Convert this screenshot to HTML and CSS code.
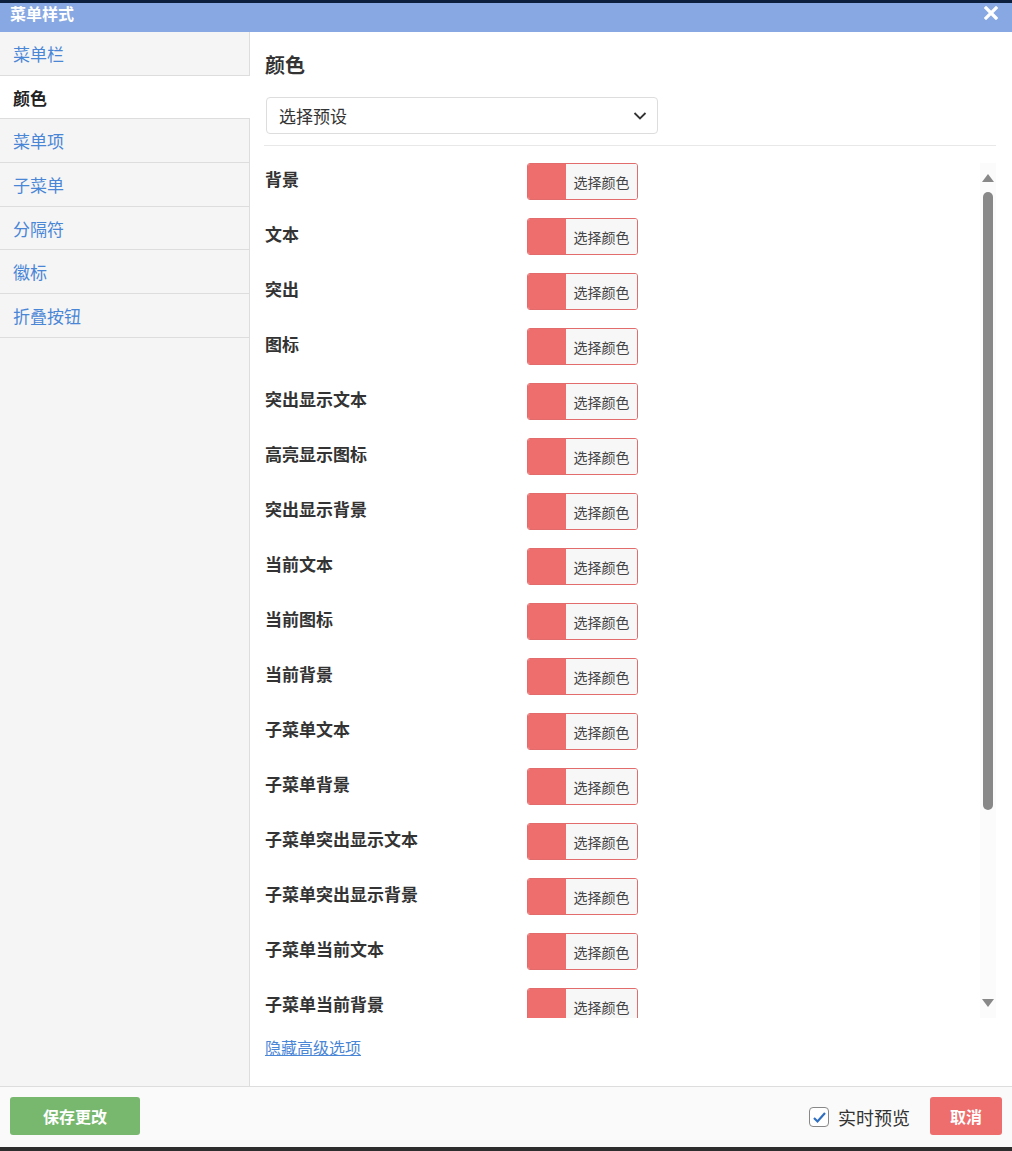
FILE: index.html
```html
<!DOCTYPE html>
<html lang="zh-CN">
<head>
    <meta charset="UTF-8">
    <meta name="viewport" content="width=device-width, initial-scale=1.0">
    <title>菜单样式</title>
    <link rel="stylesheet" href="styles.css">
</head>
<body>
    <div class="top-line"></div>
    <div class="modal-header">
        <span class="modal-title">菜单样式</span>
        <span class="modal-close">
            <svg width="14" height="14" viewBox="0 0 14 14"><path d="M2 2 L12 12 M12 2 L2 12" stroke="#fff" stroke-width="3.2" stroke-linecap="square"/></svg>
        </span>
    </div>

    <div class="modal-body">
        <ul class="side-tabs">
            <li class="tab">菜单栏</li>
            <li class="tab active">颜色</li>
            <li class="tab">菜单项</li>
            <li class="tab">子菜单</li>
            <li class="tab">分隔符</li>
            <li class="tab">徽标</li>
            <li class="tab">折叠按钮</li>
        </ul>

        <div class="tab-content">
            <h3 class="section-title">颜色</h3>
            <div class="preset-select">
                <span>选择预设</span>
                <svg width="14" height="10" viewBox="0 0 14 10"><path d="M1.5 2 L7 7.5 L12.5 2" fill="none" stroke="#333" stroke-width="1.8"/></svg>
            </div>
            <div class="divider"></div>

            <div class="color-panel">
                <div class="color-list" id="color-list">
                    <!-- rows are added by the script below -->
                </div>
                <div class="scrollbar">
                    <div class="arrow-up"></div>
                    <div class="thumb"></div>
                    <div class="arrow-down"></div>
                </div>
            </div>

            <a class="advanced-link" href="#">隐藏高级选项</a>
        </div>
    </div>

    <div class="modal-footer">
        <button class="btn btn-save">保存更改</button>
        <div class="footer-right">
            <label class="live-preview">
                <span class="check-box">
                    <svg width="15" height="13" viewBox="0 0 15 13"><path d="M2 7 L5.5 10.5 L13 2" fill="none" stroke="#2f6fc0" stroke-width="2.2"/></svg>
                </span>
                实时预览
            </label>
            <button class="btn btn-cancel">取消</button>
        </div>
    </div>
    <div class="bottom-line"></div>

    <script>
        const colorOptions = [
            '背景', '文本', '突出', '图标', '突出显示文本', '高亮显示图标',
            '突出显示背景', '当前文本', '当前图标', '当前背景', '子菜单文本',
            '子菜单背景', '子菜单突出显示文本', '子菜单突出显示背景',
            '子菜单当前文本', '子菜单当前背景'
        ];
        const colorList = document.getElementById('color-list');

        colorOptions.forEach(name => {
            const row = document.createElement('div');
            row.classList.add('color-row');

            const label = document.createElement('span');
            label.classList.add('color-label');
            label.textContent = name;

            const picker = document.createElement('div');
            picker.classList.add('color-picker');
            picker.innerHTML = '<span class="swatch"></span><span class="picker-text">选择颜色</span>';

            row.appendChild(label);
            row.appendChild(picker);
            colorList.appendChild(row);
        });
    </script>
</body>
</html>
```

FILE: styles.css
```css
/* 菜单样式弹窗 */
* {
  box-sizing: border-box;
}

body {
  margin: 0;
  width: 1012px;
  height: 1151px;
  overflow: hidden;
  background-color: #fff;
  font-family: "Noto Sans CJK SC", "Noto Sans", sans-serif;
  color: #333;
  display: flex;
  flex-direction: column;
}

.top-line {
  height: 3px;
  background-color: #0c1f3c;
}

.modal-header {
  height: 29px;
  background-color: #87a8e2;
  padding: 0 14px 0 10px;
  display: flex;
  justify-content: space-between;
  align-items: center;
}

.modal-title {
  color: #fff;
  font-size: 16px;
  font-weight: bold;
  line-height: 1;
  margin-top: -10px;
}

.modal-close {
  display: flex;
  margin-top: -9px;
}

.modal-body {
  height: 1054px;
  display: flex;
}

.side-tabs {
  list-style: none;
  margin: 0;
  padding: 0;
  width: 250px;
  background-color: #f5f5f5;
  border-right: 1px solid #ddd;
}

.tab {
  height: 43.7px;
  padding-left: 13px;
  border-bottom: 1px solid #ddd;
  font-size: 17px;
  line-height: 43px;
  color: #4a86d6;
}

.tab.active {
  background-color: #fff;
  color: #222;
  font-weight: bold;
  margin-right: -1px;
}

.tab-content {
  flex: 1;
  padding: 0 16px 0 15px;
  display: flex;
  flex-direction: column;
}

.section-title {
  margin: 18px 0 0 0;
  font-size: 20px;
  line-height: 30px;
  font-weight: bold;
  color: #333;
}

.preset-select {
  margin-top: 17px;
  margin-left: 1px;
  width: 392px;
  height: 37px;
  border: 1px solid #ddd;
  border-radius: 4px;
  padding: 0 10px 0 12px;
  display: flex;
  justify-content: space-between;
  align-items: center;
  font-size: 17px;
  color: #333;
}

.divider {
  margin-top: 11px;
  margin-left: -1px;
  height: 1px;
  background-color: #e8e8e8;
}

.color-panel {
  margin-top: 17px;
  height: 855px;
  display: flex;
}

.color-list {
  flex: 1;
  overflow: hidden;
}

.color-row {
  height: 37px;
  margin-bottom: 18px;
  display: flex;
  align-items: center;
}

.color-label {
  width: 262px;
  font-size: 17px;
  font-weight: bold;
  color: #333;
  margin-top: -6px;
}

.color-picker {
  width: 111px;
  height: 37px;
  border: 1px solid #e26c6c;
  border-radius: 3px;
  overflow: hidden;
  display: flex;
}

.swatch {
  width: 38px;
  background-color: #ee6e6e;
}

.picker-text {
  flex: 1;
  background-color: #f7f7f7;
  font-size: 14px;
  color: #444;
  display: flex;
  align-items: center;
  justify-content: center;
}

.scrollbar {
  width: 16px;
  background-color: #fbfbfb;
  display: flex;
  flex-direction: column;
  align-items: center;
  padding-top: 11px;
}

.arrow-up {
  width: 0;
  height: 0;
  border-left: 6px solid transparent;
  border-right: 6px solid transparent;
  border-bottom: 8px solid #888;
}

.thumb {
  margin-top: 10px;
  width: 10px;
  height: 618px;
  border-radius: 5px;
  background-color: #888;
}

.arrow-down {
  margin-top: 189px;
  width: 0;
  height: 0;
  border-left: 6px solid transparent;
  border-right: 6px solid transparent;
  border-top: 8px solid #888;
}

.advanced-link {
  margin-top: 17px;
  font-size: 16px;
  color: #4a86d6;
  text-decoration: underline;
  align-self: flex-start;
}

.modal-footer {
  height: 61px;
  background-color: #fafafa;
  border-top: 1px solid #ddd;
  padding: 0 10px;
  display: flex;
  justify-content: space-between;
  align-items: center;
}

.btn {
  height: 38px;
  border: none;
  border-radius: 3px;
  color: #fff;
  font-family: inherit;
  font-size: 16px;
  font-weight: bold;
  cursor: pointer;
  margin-top: -2px;
}

.btn-save {
  width: 130px;
  background-color: #77b86e;
}

.footer-right {
  display: flex;
  align-items: center;
}

.live-preview {
  display: flex;
  align-items: center;
  font-size: 18px;
  color: #333;
  margin-right: 20px;
}

.check-box {
  width: 20px;
  height: 20px;
  border: 1px solid #888;
  border-radius: 4px;
  background-color: #fff;
  margin-right: 9px;
  display: flex;
  align-items: center;
  justify-content: center;
}

.btn-cancel {
  width: 72px;
  background-color: #ee6d6d;
}

.bottom-line {
  height: 4px;
  background-color: #2d2d2d;
}
```
